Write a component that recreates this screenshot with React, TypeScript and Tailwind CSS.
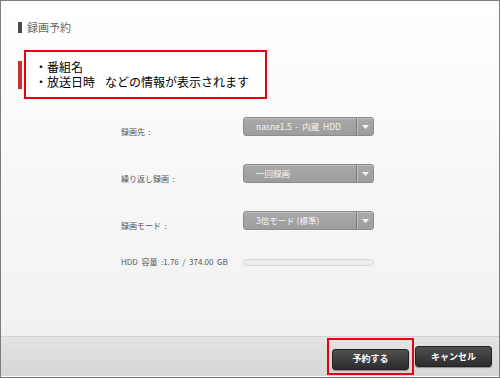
import React from 'react';

const font = { fontFamily: '"Noto Sans CJK JP", "Noto Sans", sans-serif' };

const Select: React.FC<{ label: string }> = ({ label }) => (
  <div className="flex h-[19px] w-[131px] rounded-[3px] border border-[#8c8c8c] bg-gradient-to-b from-[#a9a9a9] to-[#9d9d9d] shadow-[inset_0_1px_0_rgba(255,255,255,0.25)]">
    <div className="flex flex-1 items-center whitespace-pre pl-[12px] text-[8.5px] leading-none text-[#f6f6f6]">{label}</div>
    <div className="flex w-[17px] items-center justify-center border-l border-[#7c7c7c] shadow-[inset_1px_0_0_rgba(255,255,255,0.3)]">
      <svg width="7" height="4" viewBox="0 0 7 4">
        <path d="M0 0h7L3.5 4z" fill="#f4f4f4" />
      </svg>
    </div>
  </div>
);

const Row: React.FC<{ label: string; value: string }> = ({ label, value }) => (
  <div className="flex items-start">
    <div className="w-[122px] whitespace-pre pt-[11px] text-[8px] leading-[8px] text-[#555]">{label}</div>
    <Select label={value} />
  </div>
);

const App: React.FC = () => {
  return (
    <div className="h-[378px] w-[500px] bg-[#6f6c80]" style={font}>
      <div className="flex h-[377px] flex-col border-x border-t border-[#7d7d7d]">
        <div className="flex-1 bg-gradient-to-b from-white to-[#f1f1f1]">
          <div className="ml-[17px] mt-[21px] flex items-center gap-[5px]">
            <div className="h-[11px] w-[4px] bg-[#4a4a4a]" />
            <span className="text-[11px] leading-none text-[#666]">録画予約</span>
          </div>

          <div className="ml-[17px] mt-[17px] flex items-center gap-[2px]">
            <div className="h-[28px] w-[4px] bg-[#c8302e]" />
            <div className="flex h-[49px] w-[243px] flex-col justify-center gap-[3px] border-2 border-[#e60012] bg-white pl-[9px] text-[12px] leading-[12px] text-black">
              <div>・番組名</div>
              <div>
                ・放送日時<span className="inline-block w-[10px]" />などの情報が表示されます
              </div>
            </div>
          </div>

          <div className="ml-[120px] mt-[18px] flex flex-col gap-[28px]">
            <Row label="録画先  :" value="nasne1.5  -  内蔵  HDD" />
            <Row label="繰り返し録画  :" value="一回録画" />
            <Row label="録画モード  :" value="3倍モード (標準)" />
            <div className="flex items-center">
              <div className="w-[122px] whitespace-pre text-[8px] leading-[8px] text-[#555]">HDD  容量  :1.76  /  374.00  GB</div>
              <div className="h-[7px] w-[131px] rounded-full border border-[#d6d6d6] bg-[#ededed]" />
            </div>
          </div>
        </div>

        <div className="flex h-[41px] items-center justify-end gap-[1px] border-t border-[#d2d2d2] border-b border-b-white bg-gradient-to-b from-[#e4e4e4] to-[#d6d6d6] pr-[7px]">
          <div className="border-2 border-[#e60012] p-[3px]">
            <button className="h-[21px] w-[77px] rounded-[3px] border border-[#222] bg-gradient-to-b from-[#505050] to-[#2c2c2c] text-[9px] font-bold text-white shadow-[0_1px_1px_rgba(0,0,0,0.35)]">
              予約する
            </button>
          </div>
          <button className="h-[21px] w-[77px] rounded-[3px] border border-[#222] bg-gradient-to-b from-[#505050] to-[#2c2c2c] text-[9px] font-bold text-white shadow-[0_1px_1px_rgba(0,0,0,0.35)]">
            キャンセル
          </button>
        </div>
      </div>
    </div>
  );
};

export default App;
